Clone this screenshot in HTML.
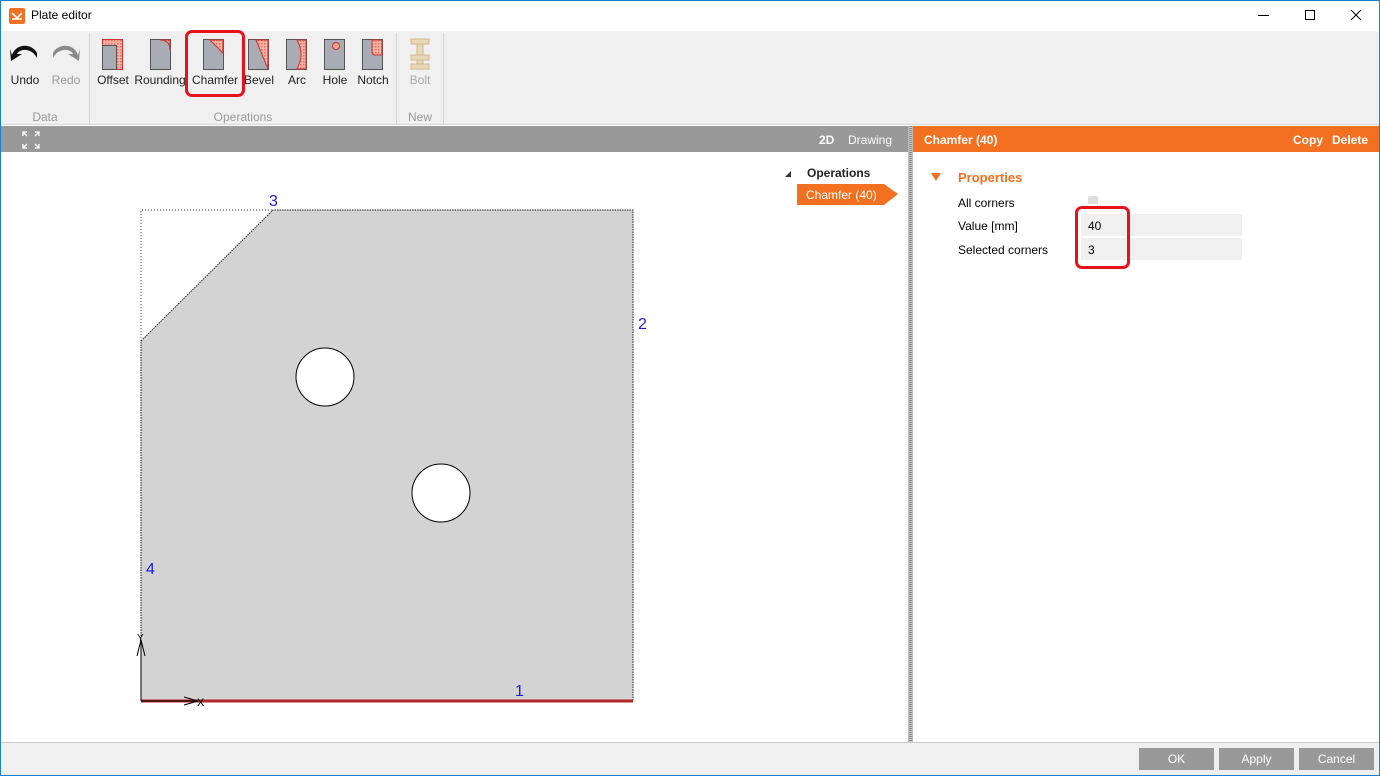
<!DOCTYPE html>
<html><head><style>
*{margin:0;padding:0;box-sizing:border-box}
body{width:1380px;height:776px;position:relative;overflow:hidden;background:#fff;font-family:"Liberation Sans",sans-serif;font-size:12px;color:#000}
.a{position:absolute}
.lbl{position:absolute;font-size:12px;color:#222;text-align:center}
</style></head><body>
<div class="a" style="left:0;top:0;width:1380px;height:776px;border:1px solid #1b7fd4"></div>
<!-- title -->
<div class="a" style="left:9px;top:8px;width:16px;height:16px;background:#f07024;border-radius:2px"></div>
<svg class="a" style="left:9px;top:8px" width="16" height="16"><path d="M3 5 L8 10 L13 5 M3 11 H13" stroke="#fff" stroke-width="1.6" fill="none"/></svg>
<div class="a" style="left:31px;top:8px;font-size:12px">Plate editor</div>
<div class="a" style="left:1258px;top:15px;width:11px;height:1px;background:#000"></div>
<div class="a" style="left:1305px;top:10px;width:10px;height:10px;border:1px solid #000"></div>
<svg class="a" style="left:1350px;top:9px" width="12" height="12"><path d="M1 1 L11 11 M11 1 L1 11" stroke="#000" stroke-width="1"/></svg>
<!-- ribbon -->
<div class="a" style="left:1px;top:31px;width:1378px;height:94px;background:#f0f0f0;border-bottom:1px solid #d8d8d8"></div>
<div class="a" style="left:89px;top:33px;width:1px;height:92px;background:#d5d5d5"></div>
<div class="a" style="left:396px;top:33px;width:1px;height:92px;background:#d5d5d5"></div>
<div class="a" style="left:443px;top:33px;width:1px;height:92px;background:#d5d5d5"></div>
<svg class="a" style="left:0;top:31px" width="450" height="60">
<defs><pattern id="h" width="3" height="3" patternUnits="userSpaceOnUse"><rect width="3" height="3" fill="#f6b2a4"/><rect width="1.5" height="1.5" fill="#ef6f5e"/></pattern></defs>
<!-- undo -->
<path d="M12 24 C16 12 32 12 37 22 L37 27 C32 17 20 17 17 23 L22 23 L11 30 L10 18 Z" fill="#111"/>
<path d="M78 24 C74 12 58 12 53 22 L53 27 C58 17 70 17 73 23 L68 23 L79 30 L80 18 Z" fill="#8a8a8a"/>
<!-- offset -->
<rect x="102.5" y="8.5" width="20" height="30" fill="url(#h)" stroke="#c33"/>
<rect x="102.5" y="14.5" width="14" height="24" fill="#a9acb4" stroke="#555"/>
<!-- rounding -->
<rect x="150.5" y="8.5" width="20" height="30" fill="#a9acb4" stroke="#555"/>
<path d="M160 9 Q170 9 170 19 L170 9 Z" fill="url(#h)" stroke="#c33"/>
<!-- chamfer -->
<rect x="203.5" y="8.5" width="20" height="30" fill="#a9acb4" stroke="#555"/>
<path d="M210 9 L223 9 L223 22 Z" fill="url(#h)" stroke="#c33"/>
<!-- bevel -->
<rect x="248.5" y="8.5" width="20" height="30" fill="#a9acb4" stroke="#555"/>
<path d="M256 9 L268 9 L268 38 Z" fill="url(#h)" stroke="#c33"/>
<!-- arc -->
<rect x="286.5" y="8.5" width="20" height="30" fill="#a9acb4" stroke="#555"/>
<path d="M297 9 Q305 23 297 38 L306 38 L306 9 Z" fill="url(#h)" stroke="#c33"/>
<!-- hole -->
<rect x="324.5" y="8.5" width="20" height="30" fill="#a9acb4" stroke="#555"/>
<circle cx="336" cy="15" r="3.5" fill="#f6a090" stroke="#c33"/>
<!-- notch -->
<rect x="362.5" y="8.5" width="20" height="30" fill="#a9acb4" stroke="#555"/>
<path d="M372 9 L382 9 L382 24 L375 24 Q372 24 372 20 Z" fill="url(#h)" stroke="#c33"/>
<!-- bolt -->
<g fill="#e8d8b8" stroke="#d0b890"><rect x="411" y="8" width="18" height="5"/><rect x="417" y="13" width="6" height="20"/><rect x="411" y="24" width="18" height="5"/><rect x="411" y="33" width="18" height="5"/></g>
</svg>
<div class="a" style="left:185px;top:30px;width:60px;height:67px;border:3px solid #e8121c;border-radius:7px"></div>
<div class="lbl" style="left:6px;top:73px;width:38px">Undo</div>
<div class="lbl" style="left:48px;top:73px;width:36px;color:#999">Redo</div>
<div class="lbl" style="left:95px;top:73px;width:36px">Offset</div>
<div class="lbl" style="left:134px;top:73px;width:52px">Rounding</div>
<div class="lbl" style="left:190px;top:73px;width:50px">Chamfer</div>
<div class="lbl" style="left:243px;top:73px;width:32px">Bevel</div>
<div class="lbl" style="left:282px;top:73px;width:30px">Arc</div>
<div class="lbl" style="left:320px;top:73px;width:30px">Hole</div>
<div class="lbl" style="left:355px;top:73px;width:36px">Notch</div>
<div class="lbl" style="left:405px;top:73px;width:30px;color:#aaa">Bolt</div>
<div class="lbl" style="left:25px;top:110px;width:40px;color:#999">Data</div>
<div class="lbl" style="left:200px;top:110px;width:86px;color:#999">Operations</div>
<div class="lbl" style="left:400px;top:110px;width:40px;color:#999">New</div>
<!-- gray bars -->
<div class="a" style="left:1px;top:126px;width:907px;height:26px;background:#999"></div>
<svg class="a" style="left:20px;top:129px" width="22" height="22"><g stroke="#fff" stroke-width="1.3" fill="none"><path d="M3 7V3H7M3 3L7 7M19 7V3H15M19 3L15 7M3 15V19H7M3 19L7 15M19 15V19H15M19 19L15 15"/></g></svg>
<div class="a" style="left:819px;top:133px;color:#fff;font-weight:bold">2D</div>
<div class="a" style="left:848px;top:133px;color:#fff">Drawing</div>
<div class="a" style="left:908px;top:126px;width:5px;height:616px;background:repeating-linear-gradient(#888 0 1px,#ccc 1px 2px);border-left:1px solid #bbb;border-right:1px solid #bbb"></div>
<div class="a" style="left:913px;top:126px;width:466px;height:26px;background:#f37021"></div>
<div class="a" style="left:924px;top:133px;color:#fff;font-weight:bold">Chamfer  (40)</div>
<div class="a" style="left:1293px;top:133px;color:#fff;font-weight:bold">Copy</div>
<div class="a" style="left:1332px;top:133px;color:#fff;font-weight:bold">Delete</div>
<!-- drawing -->
<svg class="a" style="left:0;top:0" width="908" height="742">
<polygon points="141,701 633,701 633,210 273,210 141,341" fill="#d3d3d3"/>
<path d="M141 701 V341 L273 210 H633 V701" fill="none" stroke="#222" stroke-width="1" stroke-dasharray="1.5 1"/>
<path d="M141 341 V210 H273" fill="none" stroke="#333" stroke-width="1" stroke-dasharray="1 2"/>
<circle cx="325" cy="377" r="29" fill="#fff" stroke="#000"/>
<circle cx="441" cy="493" r="29" fill="#fff" stroke="#000"/>
<line x1="141" y1="701" x2="633" y2="701" stroke="#b02828" stroke-width="3"/>
<path d="M141 701 V640 M137 656 L141 640 L145 656 M141 701 H198 M184 697 L198 701 L184 705" stroke="#000" fill="none"/>
<text x="137" y="641" font-size="10" font-family="Liberation Sans">Y</text>
<text x="197" y="706" font-size="11" font-family="Liberation Sans">X</text>
<g fill="#1a1ae0" font-family="Liberation Sans" font-size="16"><text x="515" y="696">1</text><text x="638" y="329">2</text><text x="269" y="206">3</text><text x="146" y="574">4</text></g>
<path d="M785 177 L791 171 L791 177 Z" fill="#333"/>
<path d="M797 184 H884 L898 194 L884 205 H797 Z" fill="#f37021"/>
</svg>
<div class="a" style="left:807px;top:166px;font-weight:bold;color:#222">Operations</div>
<div class="a" style="left:806px;top:188px;color:#fff">Chamfer  (40)</div>
<!-- properties -->
<svg class="a" style="left:931px;top:173px" width="12" height="10"><path d="M0 0 H10 L5 8Z" fill="#f37021"/></svg>
<div class="a" style="left:958px;top:170px;color:#f37021;font-weight:bold;font-size:13px">Properties</div>
<div class="a" style="left:958px;top:196px">All corners</div>
<div class="a" style="left:1088px;top:196px;width:10px;height:8px;background:#ddd;border-radius:2px 2px 0 0"></div>
<div class="a" style="left:958px;top:219px">Value [mm]</div>
<div class="a" style="left:1081px;top:214px;width:161px;height:22px;background:#f0f0f0"></div>
<div class="a" style="left:1088px;top:219px">40</div>
<div class="a" style="left:958px;top:243px">Selected corners</div>
<div class="a" style="left:1081px;top:238px;width:161px;height:22px;background:#f0f0f0"></div>
<div class="a" style="left:1088px;top:243px">3</div>
<div class="a" style="left:1075px;top:206px;width:55px;height:63px;border:3px solid #e8121c;border-radius:7px"></div>
<!-- footer -->
<div class="a" style="left:1px;top:742px;width:1378px;height:33px;background:#f0f0f0;border-top:1px solid #ccc"></div>
<div class="a" style="left:1139px;top:748px;width:75px;height:22px;background:#999;color:#fff;text-align:center;line-height:22px">OK</div>
<div class="a" style="left:1219px;top:748px;width:75px;height:22px;background:#999;color:#fff;text-align:center;line-height:22px">Apply</div>
<div class="a" style="left:1299px;top:748px;width:75px;height:22px;background:#999;color:#fff;text-align:center;line-height:22px">Cancel</div>
</body></html>
